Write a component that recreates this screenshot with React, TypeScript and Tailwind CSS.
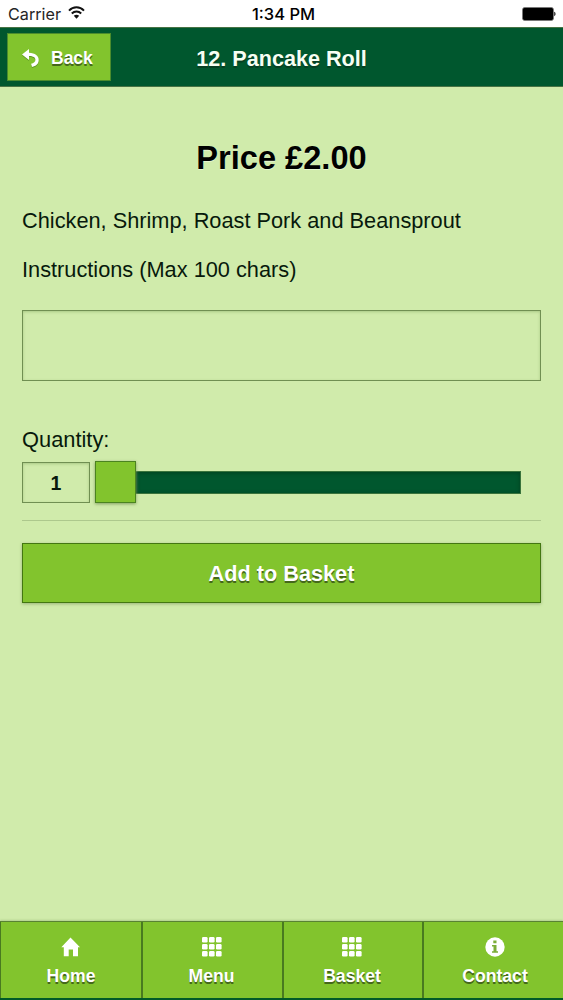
import type { ReactNode } from "react";

const raised = "[text-shadow:0_1.5px_0_#44681a]";

function BackIcon() {
  return (
    <svg width="18" height="20" viewBox="0 0 18 20" className="mt-[3px] overflow-visible drop-shadow-[0_1px_0_#5f9622]">
      <path d="M0 5.500 7 0v3.700c6.200.2 9.800 3.200 9.700 7.300 0 3.800-2.600 6.200-6.700 7l-.9-3.200c2.700-.5 4.300-1.900 4.300-4 0-2.200-2-3.600-6.400-3.700V11z" fill="#fff" />
    </svg>
  );
}

function HomeIcon() {
  return (
    <svg width="20" height="20" viewBox="0 0 20 20">
      <path d="M9.500 0.500 19 10.200h-2V19.300h-5v-6.800H7.700v6.800H2.800V10.200H0.300z" fill="#fff" />
    </svg>
  );
}

function GridIcon() {
  const cells = [0, 7, 14];
  return (
    <svg width="20" height="20" viewBox="0 0 20 20">
      {cells.map((y) =>
        cells.map((x) => <rect key={`${x}-${y}`} x={x} y={y} width="5.6" height="5.6" rx="1.300" fill="#fff" />)
      )}
    </svg>
  );
}

function InfoIcon() {
  return (
    <svg width="20" height="20" viewBox="0 0 20 20">
      <circle cx="10" cy="10" r="9.700" fill="#fff" />
      <path d="M8.300 3.600h3.200v2.700H8.300zM7 8h4.500v6.200h1.500v1.600H7v-1.600h1.500V9.600H7z" fill="#7cad38" />
    </svg>
  );
}

function Tab({ label, icon, edge }: { label: string; icon: ReactNode; edge: string }) {
  return (
    <button className={`flex flex-col items-center border-[#497a20] bg-[#82c42d] pt-[15px] ${edge}`}>
      {icon}
      <span className={`mt-[8px] text-[17.600px] leading-[22px] font-bold text-white ${raised}`}>{label}</span>
    </button>
  );
}

export default function App() {
  return (
    <div className="flex h-[1000px] w-[563px] flex-col overflow-hidden bg-[#d0ebab] font-['Liberation_Sans',Arial,sans-serif] text-[#07190b]">
      <div className="grid h-[27px] grid-cols-3 items-center bg-white font-[Inter,sans-serif] text-black">
        <div className="flex items-center gap-[7px] pl-[8px]">
          <span className="text-[16.200px] leading-[20px] text-[#252525]">Carrier</span>
          <svg width="17" height="13" viewBox="0 0 17 13" fill="none" stroke="#111" strokeWidth="2" className="-mt-[2px]">
            <path d="M1 4.600c4.200-4.400 10.800-4.400 15 0M3.800 7.500c2.700-2.700 6.700-2.700 9.400 0" />
            <path d="M5.800 9.800c1.600-1.400 3.800-1.400 5.400 0l-2.700 2.900z" fill="#111" stroke="none" />
          </svg>
        </div>
        <div className="pl-[4px] text-center text-[16.500px] leading-[20px] font-medium">1:34 PM</div>
        <div className="flex justify-end pr-[7px]">
          <svg width="34" height="14" viewBox="0 0 34 14">
            <rect x="0.500" y="0.500" width="31" height="13" rx="2.200" fill="#000" stroke="#777" strokeWidth="0.800" />
            <path d="M32.200 4.800c1.800.5 1.800 3.900 0 4.400z" fill="#222" />
          </svg>
        </div>
      </div>

      <header className="grid h-[60px] grid-cols-[1fr_auto_1fr] items-center border-y border-[#477344] bg-[#00572e]">
        <button className="ml-[7px] flex h-[48px] w-[104px] items-center justify-start border border-[#4c8b2d] bg-[#82c42d] pl-[14px]">
          <BackIcon />
          <span className={`mt-[2px] ml-[11px] text-[17.500px] font-bold text-white ${raised}`}>Back</span>
        </button>
        <h1 className="mt-[3px] text-[21.600px] leading-[26px] font-bold text-[#f7fff3] [text-shadow:0_1.5px_0_#064022]">12. Pancake Roll</h1>
      </header>

      <main className="flex-1 px-[22px] pt-[51px]">
        <h2 className="text-center text-[32.600px] leading-[40px] font-bold text-black [text-shadow:0_1px_0_#e4f5cf]">Price £2.00</h2>
        <p className="mt-[30px] text-[21.750px] leading-[26px]">Chicken, Shrimp, Roast Pork and Beansprout</p>
        <p className="mt-[23px] text-[21.750px] leading-[26px]">Instructions (Max 100 chars)</p>
        <textarea className="mt-[27px] block h-[71px] w-full resize-none border border-[#708f52] bg-transparent shadow-[inset_0_1px_3px_#a9c885] outline-none" />
        <div className="mt-[46px] text-[21.850px] leading-[26px]">Quantity:</div>
        <div className="mt-[9px] flex h-[41px] items-center">
          <div className="flex h-[41px] w-[68px] items-center justify-center border border-[#708f52] pt-[2px] text-[19.500px] font-bold shadow-[inset_0_1px_3px_#a9c885]">1</div>
          <div className="z-10 -mt-[1px] ml-[5px] h-[42px] w-[41px] border border-[#4b8320] bg-[#82c42d] shadow-[0_1px_3px_#829f60]" />
          <div className="-mt-[1px] h-[23px] w-[385px] border border-l-0 border-[#39733c] bg-[#00572e] shadow-[inset_0_1px_4px_#00401f]" />
        </div>
        <div className="mt-[17px] h-px bg-[#adc88d]" />
        <button className={`mt-[22px] flex h-[60px] w-full items-center justify-center border border-[#437711] bg-[#82c42d] pt-[2px] text-[21.700px] font-bold text-white shadow-[0_1px_3px_#98b278] ${raised}`}>
          Add to Basket
        </button>
      </main>

      <footer className="grid h-[79px] grid-cols-[141px_141px_140px_1fr] border-t border-b-2 border-t-[#598233] border-b-[#005b28] shadow-[0_-1px_2px_#b1cf8d]">
        <Tab label="Home" icon={<HomeIcon />} edge="border-l" />
        <Tab label="Menu" icon={<GridIcon />} edge="border-l-2 pr-[2px]" />
        <Tab label="Basket" icon={<GridIcon />} edge="border-l-2 pr-[2px]" />
        <Tab label="Contact" icon={<InfoIcon />} edge="border-l-2 pl-[3px]" />
      </footer>
    </div>
  );
}
